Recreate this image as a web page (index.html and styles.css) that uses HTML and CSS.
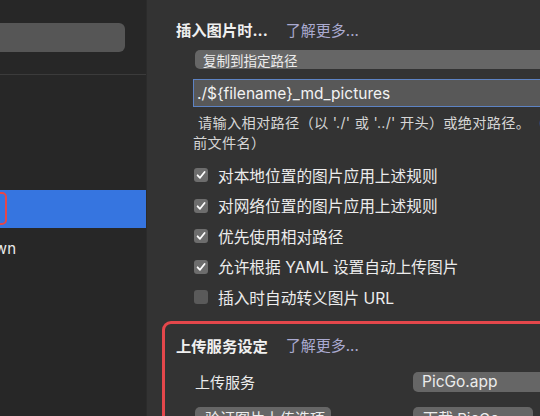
FILE: index.html
```html
<!DOCTYPE html>
<html lang="zh">
<head>
<meta charset="utf-8">
<link rel="stylesheet" href="styles.css">
</head>
<body>
<div class="app">
  <aside class="sidebar">
    <div class="search-wrap"><div class="search"></div></div>
    <div class="sep"></div>
    <div class="nav">
      <div class="nav-item selected"><span class="mark"></span></div>
      <div class="nav-item"><span class="clip"><span>Markdown</span></span></div>
    </div>
  </aside>
  <main class="main">
    <div class="head"><span class="title">插入图片时...</span><span class="more">了解更多...</span></div>
    <div class="indent">
      <div class="select wide">复制到指定路径</div>
      <div class="input">./${filename}_md_pictures</div>
      <div class="help"><span class="first">请输入相对路径（以 './' 或 '../' 开头）或绝对路径。（${filename} 代表当</span><br>前文件名）</div>
    </div>
    <div class="checks">
      <label class="row"><span class="cb on"><svg viewBox="0 0 14 14"><path d="M3.6 7.3 L6 9.8 L10.6 4" /></svg></span>对本地位置的图片应用上述规则</label>
      <label class="row"><span class="cb on"><svg viewBox="0 0 14 14"><path d="M3.6 7.3 L6 9.8 L10.6 4" /></svg></span>对网络位置的图片应用上述规则</label>
      <label class="row"><span class="cb on"><svg viewBox="0 0 14 14"><path d="M3.6 7.3 L6 9.8 L10.6 4" /></svg></span>优先使用相对路径</label>
      <label class="row"><span class="cb on"><svg viewBox="0 0 14 14"><path d="M3.6 7.3 L6 9.8 L10.6 4" /></svg></span>允许根据 YAML 设置自动上传图片</label>
      <label class="row"><span class="cb"></span>插入时自动转义图片 URL</label>
    </div>
    <section class="upload">
      <div class="head"><span class="title">上传服务设定</span><span class="more">了解更多...</span></div>
      <div class="form-row">
        <span class="label">上传服务</span>
        <span class="select value">PicGo.app</span>
      </div>
      <div class="form-row buttons">
        <span class="btn left">验证图片上传选项</span>
        <span class="btn right">下载 PicGo...</span>
      </div>
    </section>
  </main>
</div>
</body>
</html>
```
FILE: styles.css
```css
* { box-sizing: border-box; }
html, body { margin: 0; padding: 0; }
body {
  width: 540px;
  height: 416px;
  overflow: hidden;
  background: #333333;
  font-family: "Inter", "Noto Sans CJK SC", sans-serif;
  color: #e6e6e6;
}
.app { display: flex; height: 416px; }

.sidebar {
  width: 147px;
  flex: none;
  background: #272727;
  border-right: 1px solid #2b2b2b;
  display: flex;
  flex-direction: column;
}
.search-wrap { padding-top: 23px; height: 74px; }
.search {
  margin-left: -12px;
  width: 137px;
  height: 29px;
  background: #565656;
  border-radius: 6px;
}
.sep { height: 1px; background: #3b3b3b; }
.nav { padding-top: 115px; display: flex; flex-direction: column; }
.nav-item {
  height: 38px;
  display: flex;
  align-items: center;
  font-size: 15px;
  color: #ececec;
}
.nav-item.selected { background: #3675e0; position: relative; }
.mark {
  position: absolute;
  left: -30px;
  top: 2px;
  width: 37px;
  height: 33px;
  border: 2.5px solid #e4474b;
  border-radius: 5px;
}
.clip {
  width: 16px;
  overflow: hidden;
  display: flex;
  justify-content: flex-end;
  white-space: nowrap;
  line-height: 20px;
  margin-top: 3px;
}

.main {
  flex: 1;
  min-width: 0;
  overflow: hidden;
  padding: 19px 0 0 29px;
}
.head { display: flex; align-items: center; height: 20px; white-space: nowrap; }
.title { font-weight: 700; font-size: 15.3px; color: #f0f0f0; }
.more { margin-left: 18px; font-size: 15px; color: #aaaad0; }

.indent { padding-left: 17px; }
.select {
  display: flex;
  align-items: center;
  background: #666666;
  border-radius: 5px;
  color: #ececec;
  white-space: nowrap;
}
.wide {
  margin-top: 11px;
  margin-left: 2px;
  width: 380px;
  height: 19px;
  padding-left: 8px;
  font-size: 13.5px;
}
.input {
  margin-top: 10px;
  width: 380px;
  height: 28px;
  border: 1px solid #5d83c4;
  background: #585858;
  padding-left: 3px;
  display: flex;
  align-items: center;
  font-size: 15.5px;
  color: #f2f2f2;
  white-space: nowrap;
}
.help {
  margin-top: 6px;
  font-size: 14.2px;
  letter-spacing: 0.3px;
  line-height: 20px;
  color: #d6d6d6;
  white-space: nowrap;
  text-spacing-trim: space-all;
}
.help .first { padding-left: 5px; }

.checks { margin-top: 7px; padding-left: 18px; display: flex; flex-direction: column; }
.row {
  height: 30.5px;
  display: flex;
  align-items: center;
  gap: 10px;
  font-size: 15.7px;
  color: #ececec;
  white-space: nowrap;
}
.cb {
  width: 14px;
  height: 14px;
  flex: none;
  border-radius: 3px;
  background: #5a5a5a;
  display: flex;
}
.cb.on { background: #6d6d6d; }
.cb svg { width: 14px; height: 14px; }
.cb path { fill: none; stroke: #ffffff; stroke-width: 1.8; stroke-linecap: round; stroke-linejoin: round; }

.upload {
  margin-top: 8px;
  margin-left: -14px;
  width: 420px;
  height: 140px;
  border: 3px solid #e4474b;
  border-radius: 9px;
  padding: 11px 0 0 11px;
}
.form-row { display: flex; align-items: center; height: 20px; white-space: nowrap; }
.form-row:nth-of-type(2) { margin-top: 17px; }
.label { padding-left: 19px; width: 237px; font-size: 15px; color: #ececec; }
.value { width: 160px; height: 20px; padding-left: 9px; font-size: 15.5px; }
.buttons { margin-top: 16px; }
.btn {
  height: 22px;
  display: flex;
  align-items: center;
  background: #666666;
  border-radius: 5px;
  font-size: 15px;
  color: #ececec;
  padding-left: 10px;
}
.btn.left { margin-left: 19px; width: 136px; }
.btn.right { margin-left: 82px; width: 120px; }
```
